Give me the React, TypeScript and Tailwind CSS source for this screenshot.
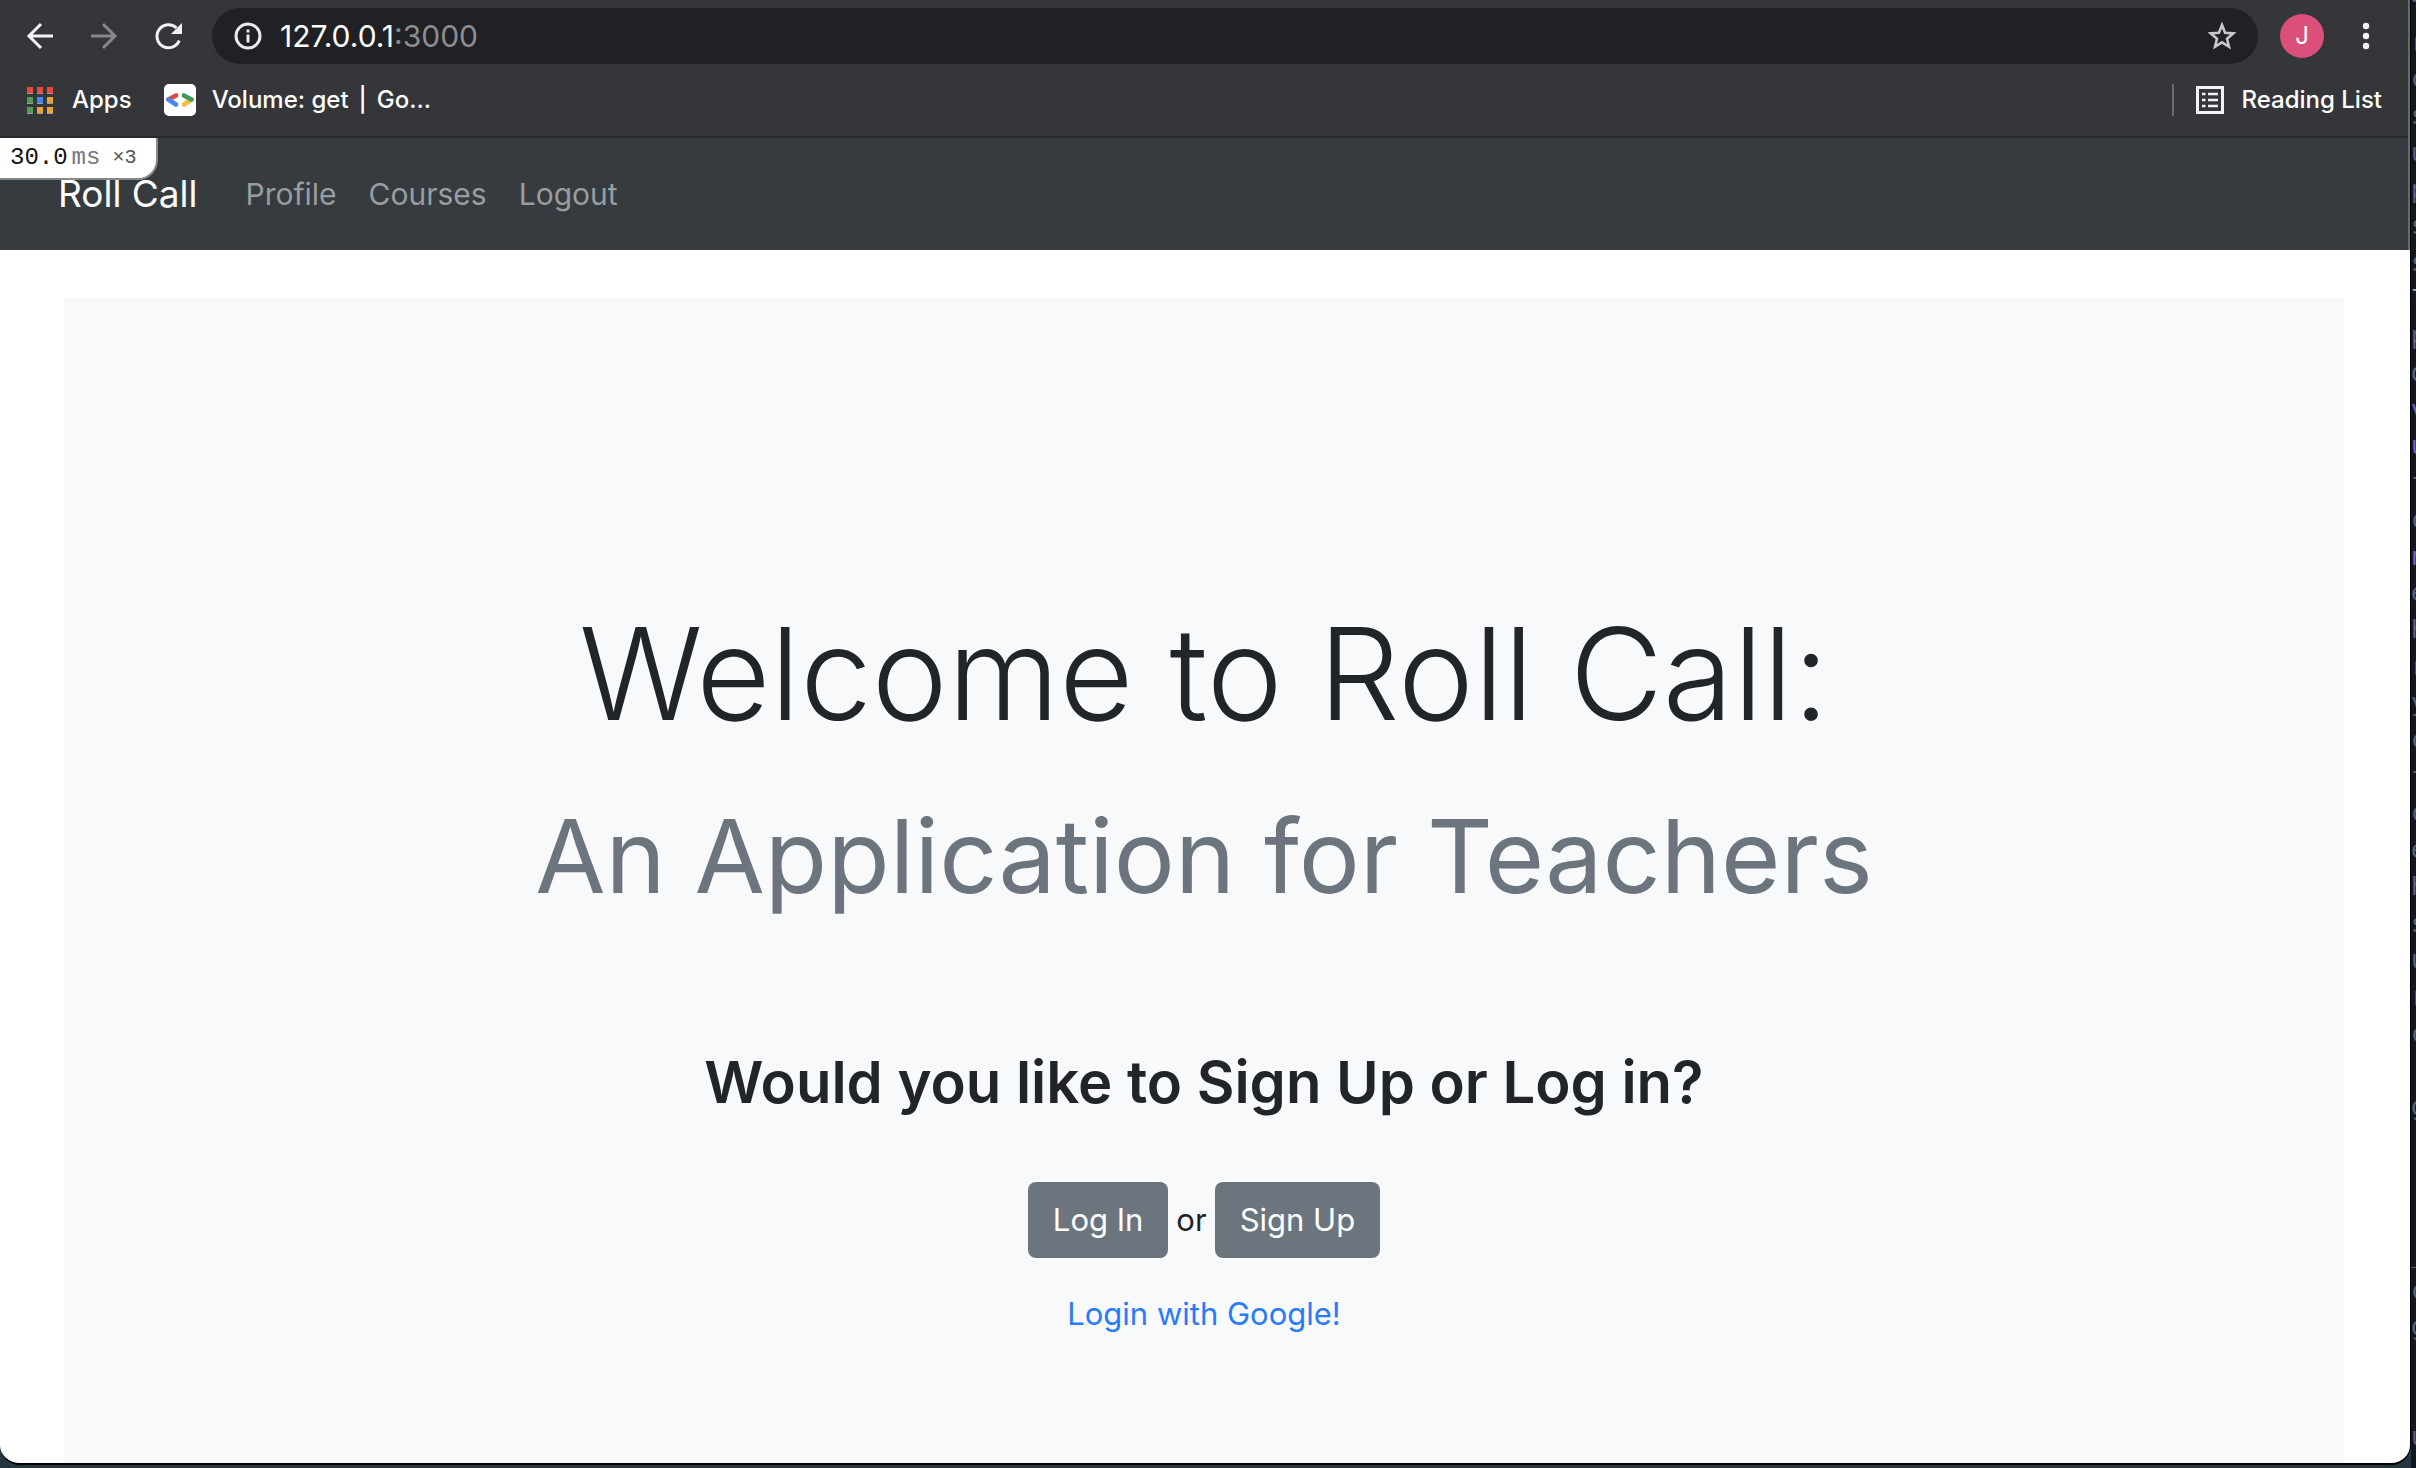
import React from "react";

const codeRows: { ch: string; tone?: "purple" | "light" }[] = [
  { ch: "t" }, { ch: "r" }, { ch: "c" }, { ch: "s" }, { ch: "u" }, { ch: "p" }, { ch: "s" }, { ch: "s" },
  { ch: "l", tone: "light" }, { ch: "p" }, { ch: "d" }, { ch: "v", tone: "purple" }, { ch: "u", tone: "purple" },
  { ch: "f" }, { ch: "c" }, { ch: "n", tone: "purple" }, { ch: "e" }, { ch: "h" }, { ch: "r" }, { ch: "y" },
  { ch: "c" }, { ch: "f" }, { ch: "c" }, { ch: "e" }, { ch: "h" }, { ch: "s" }, { ch: "u" }, { ch: "r" },
  { ch: "c" }, { ch: "" }, { ch: "g" }, { ch: "" }, { ch: "" }, { ch: "" }, { ch: "_" }, { ch: "c" },
  { ch: "g" }, { ch: "" }, { ch: "" }, { ch: "u" },
];

const toneClass = {
  plain: "text-[#5b6275]",
  purple: "text-[#7a5fc0]",
  light: "text-[#a9acb3]",
};

const appColors = [
  "#e8493a", "#e8493a", "#e8493a",
  "#539a5b", "#3f86ee", "#e8a33a",
  "#539a5b", "#e8a33a", "#e8a33a",
];

function BrowserToolbar() {
  return (
    <div className="flex items-center h-[72px] pr-[26px] text-[#f1f3f4]">
      <button aria-label="Back" className="ml-6 size-8 flex items-center justify-center">
        <svg viewBox="0 0 32 32" className="size-8" fill="none" stroke="currentColor" strokeWidth="3">
          <path d="M29 16H5M17 4 5 16l12 12" />
        </svg>
      </button>
      <button aria-label="Forward" className="ml-8 size-8 flex items-center justify-center text-[#86878a]">
        <svg viewBox="0 0 32 32" className="size-8" fill="none" stroke="currentColor" strokeWidth="3">
          <path d="M3 16h24M15 4l12 12-12 12" />
        </svg>
      </button>
      <button aria-label="Reload" className="ml-8 size-8 flex items-center justify-center">
        <svg viewBox="0 0 32 32" className="size-8" fill="none">
          <path d="M27.2 20.500A11.500 11.500 0 1 1 24.500 8" stroke="currentColor" strokeWidth="3" />
          <path d="M30 3v11H19z" fill="currentColor" />
        </svg>
      </button>
      <div className="ml-7 flex-1 h-14 rounded-full bg-[#202124] flex items-center pl-5 pr-5">
        <svg viewBox="0 0 32 32" className="size-8" fill="none">
          <circle cx="16" cy="16" r="12" stroke="#e8eaed" strokeWidth="3" />
          <path d="M16 14.500v8M16 9.500v3" stroke="#e8eaed" strokeWidth="3" />
        </svg>
        <div
          role="textbox"
          aria-label="Address"
          contentEditable
          suppressContentEditableWarning
          className="ml-4 flex-1 text-[30px] leading-9 text-white outline-none"
        >
          127.0.0.1<span className="text-[#8c8d90]">:3000</span>
        </div>
        <button aria-label="Bookmark this page">
          <svg viewBox="0 0 32 32" className="size-8" fill="none" stroke="#c7c8ca" strokeWidth="2.600">
            <path d="m16 5 3.100 7.700 8.200.7-6.300 5.300 2 8.100-7-4.400-7 4.400 2-8.100-6.300-5.300 8.200-.7z" />
          </svg>
        </button>
      </div>
      <button aria-label="Profile J" className="ml-[22px] size-11 rounded-full bg-[#db4f7b] text-white text-[24px] leading-none">
        J
      </button>
      <button aria-label="Menu" className="ml-[26px] size-8">
        <svg viewBox="0 0 32 32" className="size-8" fill="currentColor">
          <circle cx="16" cy="6" r="3.200" />
          <circle cx="16" cy="16" r="3.200" />
          <circle cx="16" cy="26" r="3.200" />
        </svg>
      </button>
    </div>
  );
}

function BookmarksBar() {
  return (
    <div className="flex items-center h-14 pl-[26px] pr-[26px] text-white text-[24px] leading-8 font-medium">
      <a href="#apps" className="flex items-center gap-[18px]">
        <svg viewBox="0 0 28 28" className="size-7">
          {appColors.map((color, i) => (
            <g key={i}>
              <rect x={1 + (i % 3) * 10} y={1 + Math.floor(i / 3) * 10} width="6" height="6" fill={color} />
              <rect x={1 + (i % 3) * 10} y={7 + Math.floor(i / 3) * 10} width="6" height="1" fill="#9a9a9c" />
            </g>
          ))}
        </svg>
        Apps
      </a>
      <a href="#volume" className="ml-8 flex items-center gap-4">
        <svg viewBox="0 0 32 32" className="size-8" strokeWidth="4.600" strokeLinecap="round">
          <rect width="32" height="32" rx="5" fill="#fff" />
          <path d="M4.500 15.500 12 11.500" stroke="#dc4b3e" />
          <path d="M27.500 15.500 20 20.500" stroke="#f5bd42" />
          <path d="M20 11.500 27.500 15.500" stroke="#3f9b5c" />
          <path d="M4.500 15.500 12 20.500" stroke="#4a86f0" />
        </svg>
        <span className="flex gap-[10px]">
          <span>Volume: get</span>
          <span>|</span>
          <span>Go...</span>
        </span>
      </a>
      <div className="ml-auto w-[2px] h-8 bg-[#6b6c6f]" />
      <button className="ml-5 flex items-center gap-4">
        <svg viewBox="0 0 32 32" className="size-8" fill="none" stroke="#f1f3f4">
          <rect x="3.500" y="3.500" width="25" height="25" strokeWidth="3" />
          <path d="M8 10h3.500M8 16h3.500M8 22h3.500M14 10h10M14 16h10M14 22h10" strokeWidth="2.600" />
        </svg>
        Reading List
      </button>
    </div>
  );
}

function SiteNav() {
  return (
    <nav className="relative flex items-center h-28 pl-[58px] bg-[#353b3f] border-r-2 border-[#68696c]">
      <div className="absolute left-0 top-0 flex items-center h-[42px] w-[158px] pl-[10px] bg-white border-r-2 border-b-2 border-[#888] rounded-br-[20px] font-['Liberation_Mono',monospace] text-[24px] leading-6 text-[#111]">
        30.0
        <span className="ml-1 text-[24px] text-[#777]">ms</span>
        <span className="ml-3 text-[20px] text-[#555]">×3</span>
      </div>
      <a href="#home" className="text-[37px] leading-[60px] text-white">Roll Call</a>
      <div className="ml-12 flex gap-8 text-[30px] leading-[48px] text-[#9a9d9f]">
        <a href="#profile">Profile</a>
        <a href="#courses">Courses</a>
        <a href="#logout">Logout</a>
      </div>
    </nav>
  );
}

function Welcome() {
  return (
    <main className="flex-1 bg-white pl-16 pr-[66px] pt-12 flex flex-col">
      <section className="flex-1 bg-[#f8f9fb] pt-[290px] flex flex-col items-center text-center text-[#212529]">
        <h1 className="text-[128px] leading-[172px] font-light whitespace-nowrap">
          Welcome to Roll Call:
          <small className="block text-[102px] leading-[192px] font-normal text-[#6c757d]">
            An Application for Teachers
          </small>
        </h1>
        <h2 className="mt-[90px] text-[58px] leading-[80px] font-semibold">Would you like to Sign Up or Log in?</h2>
        <div className="mt-[60px] flex items-center gap-2 text-[31px] leading-[48px]">
          <button className="h-19 px-[25px] rounded-lg bg-[#6c757d] text-white">Log In</button>
          <span>or</span>
          <button className="h-19 px-[25px] rounded-lg bg-[#6c757d] text-white">Sign Up</button>
        </div>
        <a href="#google" className="mt-8 text-[31px] leading-[48px] text-[#2a7bf6]">Login with Google!</a>
      </section>
    </main>
  );
}

export default function App() {
  return (
    <div className="h-screen flex overflow-hidden bg-[#12171d] font-['Inter',sans-serif]">
      <div className="flex-1 flex flex-col bg-[#263640]">
        <div className="flex-1 flex flex-col overflow-hidden bg-[#353639] rounded-b-[20px] border-b-2 border-r border-black mb-[3px]">
          <header className="bg-[#353639] border-r-2 border-[#68696c]">
            <div className="pb-2 border-b-2 border-[#28292b]">
              <BrowserToolbar />
              <BookmarksBar />
            </div>
          </header>
          <SiteNav />
          <Welcome />
        </div>
      </div>
      <aside className="w-[5px] -mt-3 mb-3 flex flex-col overflow-hidden text-[24px] leading-9 font-['DejaVu_Sans_Mono',monospace]">
        {codeRows.map((row, i) => (
          <div key={i} className={`flex-1 min-h-0 ${toneClass[row.tone ?? "plain"]}`}>{row.ch}</div>
        ))}
      </aside>
    </div>
  );
}
